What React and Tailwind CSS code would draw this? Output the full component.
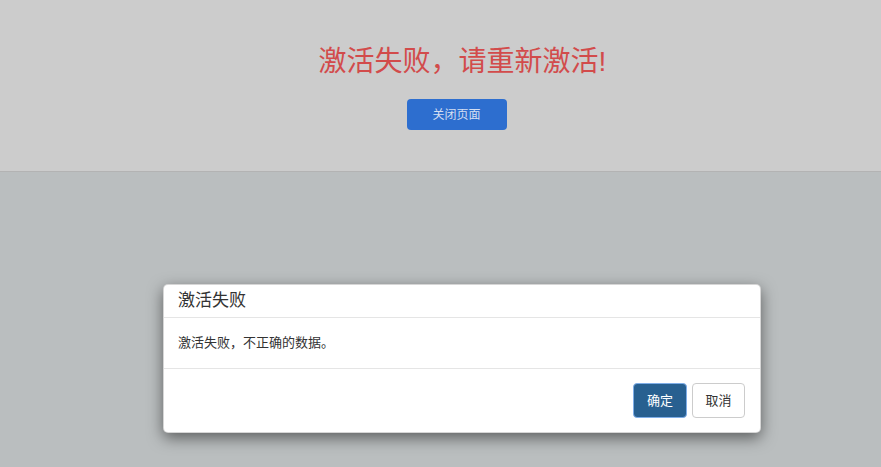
export default function App() {
  const font = { fontFamily: '"Liberation Sans", "Noto Sans CJK SC", sans-serif' }

  return (
    <div className="relative flex flex-col h-screen bg-[#babebf]" style={font}>
      {/* top panel */}
      <div className="h-[172px] bg-[#cccccc] border-b border-[#b3b3b3] flex flex-col items-center pt-[40px] pl-[32px]">
        <h1 className="ml-[12px] text-[28px] leading-[44px] text-[#d24b4b]">激活失败，请重新激活!</h1>
        <button className="mt-[15px] w-[100px] h-[31px] rounded-[4px] bg-[#2d6ecf] text-[12px] text-[#d5dff2]">
          关闭页面
        </button>
      </div>
      <div className="flex-1" />

      {/* dialog */}
      <div className="absolute left-[163px] top-[284px] w-[598px] bg-white rounded-[5px] border border-[#999]/40 shadow-[0_5px_15px_rgba(0,0,0,0.5)]">
        <div className="h-[33px] px-[14px] flex items-center border-b border-[#e5e5e5]">
          <h4 className="text-[17px] text-[#333]">激活失败</h4>
        </div>
        <div className="h-[50px] px-[14px] flex items-center text-[13px] text-[#333]">
          激活失败，不正确的数据。
        </div>
        <div className="h-[64px] border-t border-[#e5e5e5] flex items-center justify-end gap-[5px] px-[15px]">
          <button className="w-[54px] h-[35px] rounded-[4px] bg-[#286090] border border-[#7faee8] text-[13px] text-white">
            确定
          </button>
          <button className="w-[53px] h-[35px] rounded-[4px] bg-white border border-[#cccccc] text-[13px] text-[#333]">
            取消
          </button>
        </div>
      </div>
    </div>
  )
}
